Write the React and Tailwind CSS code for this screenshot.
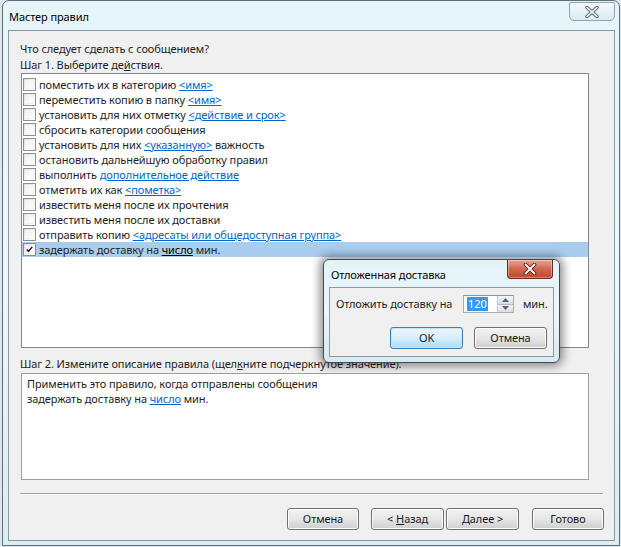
import React from 'react';

const font = { fontFamily: '"Segoe UI", "Noto Sans", "Open Sans", sans-serif' };

function Checkbox({ checked }) {
  return (
    <div className="w-[13px] h-[13px] border border-[#8e8f8f] bg-gradient-to-br from-[#dcdcdc] via-[#f4f4f4] to-white p-[1px] shrink-0">
      <div className="w-full h-full border border-[#f4f4f4] bg-white/40 flex items-center justify-center">
        {checked && (
          <svg width="9" height="9" viewBox="0 0 9 9">
            <path d="M1 4.5 L3.3 7 L8 1.2" stroke="#1a1a1a" strokeWidth="1.8" fill="none" />
          </svg>
        )}
      </div>
    </div>
  );
}

function Link({ children, dark }) {
  return <span className={`underline ${dark ? 'text-black' : 'text-[#0066cc]'}`}>{children}</span>;
}

function WinButton({ children, className = '', def }) {
  return (
    <div
      className={`h-[22px] rounded-[3px] border flex items-center justify-center text-[11px] tracking-[-0.1px] text-[#1a1a1a] whitespace-nowrap ${
        def
          ? 'border-[#3c7fb1] bg-gradient-to-b from-[#eaf6fd] via-[#d9f0fc] to-[#a7d9f5] shadow-[inset_0_0_0_1px_#c4e5f6]'
          : 'border-[#707070] bg-gradient-to-b from-[#f2f2f2] via-[#e6e6e6] to-[#cfcfcf] shadow-[inset_0_0_0_1px_#fcfcfc]'
      } ${className}`}
    >
      {children}
    </div>
  );
}

const actions = [
  ['поместить их в категорию ', <Link key="a">&lt;имя&gt;</Link>],
  ['переместить копию в папку ', <Link key="a">&lt;имя&gt;</Link>],
  ['установить для них отметку ', <Link key="a">&lt;действие и срок&gt;</Link>],
  ['сбросить категории сообщения'],
  ['установить для них ', <Link key="a">&lt;указанную&gt;</Link>, ' важность'],
  ['остановить дальнейшую обработку правил'],
  ['выполнить ', <Link key="a">дополнительное действие</Link>],
  ['отметить их как ', <Link key="a">&lt;пометка&gt;</Link>],
  ['известить меня после их прочтения'],
  ['известить меня после их доставки'],
  ['отправить копию ', <Link key="a">&lt;адресаты или общедоступная группа&gt;</Link>],
];

export default function App() {
  return (
    <div className="w-[621px] h-[547px] overflow-hidden relative bg-[#dce6ec]" style={font}>
      {/* main window */}
      <div className="ml-[2px] w-[618px] h-[546px] rounded-t-[7px] border border-[#5f6f7a] bg-gradient-to-b from-[#e6f5f9] via-[#edf8fa] to-[#dcecf2] flex flex-col pl-[5px] pr-[4px] pb-[4px]">
        <div className="h-[29px] flex justify-between items-start">
          <span className="pl-[1px] pt-[8px] text-[11px] tracking-[-0.1px] leading-[16px] text-black">Мастер правил</span>
          <div className="w-[46px] h-[19px] mt-[1px] rounded-b-[5px] rounded-t-[2px] border border-[#8fa3b0] bg-gradient-to-b from-[#f4fafc] to-[#dcebf1] flex items-center justify-center">
            <svg width="14" height="12" viewBox="0 0 14 12">
              <path d="M2 1.5 L12 10.5 M12 1.5 L2 10.5" stroke="#5b6670" strokeWidth="3.6" strokeLinecap="round" />
              <path d="M2 1.5 L12 10.5 M12 1.5 L2 10.5" stroke="#ffffff" strokeWidth="1.6" strokeLinecap="round" />
            </svg>
          </div>
        </div>

        <div className="flex-1 border border-[#8998a3] bg-[#f0f0f0] flex flex-col text-[11px] tracking-[-0.1px] text-[#1e1e1e]">
          <div className="mt-[10px] ml-[11px] h-[16px] leading-[16px]">Что следует сделать с сообщением?</div>
          <div className="ml-[11px] h-[16px] leading-[16px]">
            Шаг 1. Выберите де<span className="underline">й</span>ствия.
          </div>
          <div className="ml-[12px] w-[568px] h-[275px] border border-[#828790] bg-white pt-[3px]">
            {actions.map((a, i) => (
              <div key={i} className="h-[15px] flex items-center gap-[3px] pl-[1px] leading-[15px] whitespace-nowrap">
                <Checkbox />
                <span>{a}</span>
              </div>
            ))}
            <div className="h-[15px] flex items-center gap-[3px] pl-[1px] leading-[15px] bg-[#a9cdef] whitespace-nowrap">
              <Checkbox checked />
              <span>
                задержать доставку на <Link dark>число</Link> мин.
              </span>
            </div>
          </div>

          <div className="mt-[8px] ml-[11px] h-[16px] leading-[16px]">
            Шаг 2. Измените описание правила (щел<span className="underline">к</span>ните подчеркнутое значение).
          </div>
          <div className="mt-[1px] ml-[12px] w-[568px] h-[107px] border border-[#a0a0a0] bg-white pl-[5px] pt-[2px] leading-[15px]">
            <div>Применить это правило, когда отправлены сообщения</div>
            <div>
              задержать доставку на <Link>число</Link> мин.
            </div>
          </div>

          <div className="mt-[13px] ml-[11px] w-[583px] h-[2px] border-t border-[#a0a0a0] border-b border-b-white" />

          <div className="mt-[13px] flex ml-[278px]">
            <WinButton className="w-[72px]">Отмена</WinButton>
            <WinButton className="w-[73px] ml-[12px]">
              &lt; <span className="underline ml-[3px]">Н</span>азад
            </WinButton>
            <WinButton className="w-[73px] ml-[2px]">
              <span className="underline">Д</span>алее &gt;
            </WinButton>
            <WinButton className="w-[72px] ml-[13px]">Готово</WinButton>
          </div>
        </div>
      </div>

      {/* delayed delivery dialog */}
      <div className="absolute left-[323px] top-[259px] w-[237px] h-[104px] rounded-[6px] border border-[#3e4b55] bg-gradient-to-b from-[#e4f2f8] via-[#eef7fa] to-[#d7e9f0] shadow-[0_0_10px_3px_rgba(0,0,0,0.45)] flex flex-col px-[5px] pb-[5px]">
        <div className="h-[27px] flex justify-between items-start">
          <span className="pl-[2px] pt-[7px] text-[11px] tracking-[-0.1px] leading-[16px] text-black">Отложенная доставка</span>
          <div className="w-[46px] h-[19px] mr-[1px] rounded-b-[4px] border border-t-0 border-[#6b2a22] bg-gradient-to-b from-[#e7a593] via-[#d2664f] to-[#c4432a] shadow-[inset_0_0_0_1px_rgba(255,255,255,0.35)] flex items-center justify-center">
            <svg width="14" height="12" viewBox="0 0 14 12">
              <path d="M2.5 1.5 L11.5 10.5 M11.5 1.5 L2.5 10.5" stroke="#5a1d14" strokeWidth="3.6" strokeLinecap="round" />
              <path d="M2.5 1.5 L11.5 10.5 M11.5 1.5 L2.5 10.5" stroke="#ffffff" strokeWidth="1.8" strokeLinecap="round" />
            </svg>
          </div>
        </div>
        <div className="flex-1 border border-[#8a99a3] bg-[#f0f0f0] flex flex-col text-[11px] tracking-[-0.1px] text-[#1e1e1e]">
          <div className="mt-[7px] flex items-center h-[18px]">
            <span className="ml-[6px] w-[127px] whitespace-nowrap">Отложить доставку на</span>
            <div className="flex h-[18px] border border-[#abadb3] border-t-[#7a9ab3] bg-white">
              <div className="w-[33px] pl-[3px] flex items-center">
                <span className="bg-[#3399ff] text-white leading-[14px] px-[1px]">120</span>
              </div>
              <div className="w-[16px] flex flex-col border-l border-[#c8cacd]">
                <div className="flex-1 flex items-center justify-center bg-gradient-to-b from-[#f6f6f6] to-[#dcdcdc] border-b border-[#b8b8b8]">
                  <svg width="7" height="4" viewBox="0 0 7 4"><path d="M0 4 L3.5 0 L7 4 Z" fill="#4d6185" /></svg>
                </div>
                <div className="flex-1 flex items-center justify-center bg-gradient-to-b from-[#f6f6f6] to-[#dcdcdc]">
                  <svg width="7" height="4" viewBox="0 0 7 4"><path d="M0 0 L3.5 4 L7 0 Z" fill="#4d6185" /></svg>
                </div>
              </div>
            </div>
            <span className="ml-[9px]">мин.</span>
          </div>
          <div className="mt-[14px] flex justify-end pr-[6px] gap-[11px]">
            <WinButton def className="w-[73px] h-[21px]">OK</WinButton>
            <WinButton className="w-[73px] h-[21px]">Отмена</WinButton>
          </div>
        </div>
      </div>
    </div>
  );
}
